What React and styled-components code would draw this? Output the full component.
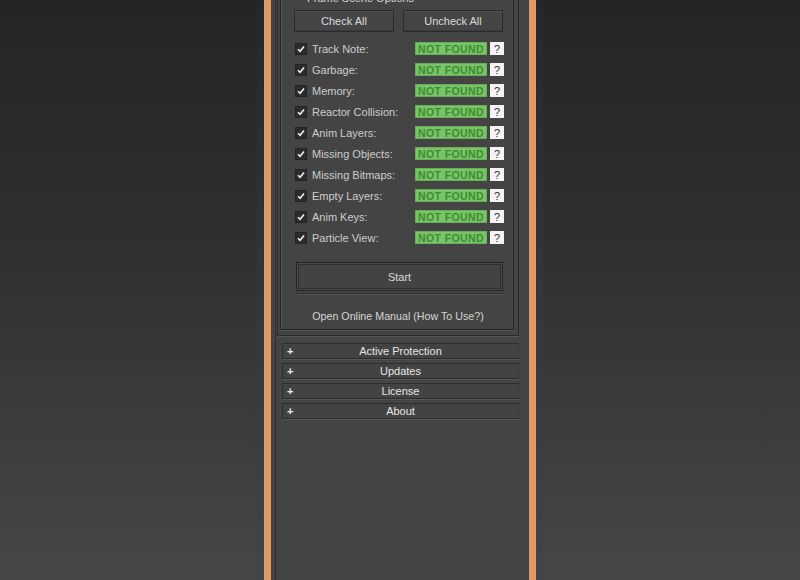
import React from "react";
import styled, { createGlobalStyle } from "styled-components";

const GlobalStyle = createGlobalStyle`
  html, body { margin: 0; padding: 0; }
  body {
    width: 800px;
    height: 580px;
    overflow: hidden;
    background: linear-gradient(180deg, #252525 0%, #2f2f2f 40%, #474747 100%);
    font-family: "Liberation Sans", Arial, sans-serif;
  }
`;

const Page = styled.div`
  height: 580px;
  display: flex;
`;

const Frame = styled.div`
  margin-left: 257px;
  width: 286px;
  height: 580px;
  box-sizing: border-box;
  padding: 0 7px;
  background: linear-gradient(180deg, #22292d 0%, #3f4649 100%);
  display: flex;
`;

const Window = styled.div`
  flex: 1;
  display: flex;
  border-left: 7px solid #e29a63;
  border-right: 7px solid #e29a63;
  background: #444444;
  overflow: hidden;
`;

const Panel = styled.div`
  flex: 1;
  margin-left: 4px;
  border-left: 1px solid #2e2e2e;
  display: flex;
  flex-direction: column;
`;

const Rollout = styled.div`
  margin: -14px 10px 0 1px;
  border: 1px solid #2a2a2a;
  box-shadow: 0 1px 0 #545454;
  padding: 4px 4px 5px 2px;
`;

const GroupBox = styled.fieldset`
  margin: 0;
  min-width: 0;
  padding: 0 9px 0 13px;
  border: 1px solid #262626;
  box-shadow: inset 1px 1px 0 #555, 0 1px 0 #555;
`;

const Legend = styled.legend`
  margin-left: 10px;
  padding: 0 3px;
  font-size: 11px;
  line-height: 14px;
  color: #d4d4d4;
`;

const ButtonRow = styled.div`
  margin-top: 5px;
  display: grid;
  grid-template-columns: 100px 100px;
  gap: 9px;
`;

const Button = styled.div`
  height: 22px;
  box-sizing: border-box;
  border: 1px solid #2b2b2b;
  background: #454545;
  box-shadow: inset 0 -1px 0 #3a3a3a, inset 0 1px 0 #4f4f4f;
  color: #dadada;
  font-size: 11px;
  display: flex;
  align-items: center;
  justify-content: center;
`;

const OptionList = styled.div`
  margin-top: 6px;
  display: flex;
  flex-direction: column;
`;

const Row = styled.div`
  height: 21px;
  display: flex;
  align-items: center;
  padding-left: 1px;
`;

const Check = styled.span`
  width: 12px;
  height: 12px;
  box-sizing: border-box;
  background: #2c2c2c;
  border: 1px solid #232323;
  display: flex;
  align-items: center;
  justify-content: center;
`;

const Label = styled.span`
  margin-left: 5px;
  flex: 1;
  color: #cdcdcd;
  font-size: 11px;
  white-space: nowrap;
`;

const Badge = styled.span`
  width: 72px;
  height: 13px;
  box-sizing: border-box;
  background: #7bc36b;
  border: 1px solid #68ae59;
  color: #3a8f2c;
  font-weight: bold;
  font-size: 10.5px;
  letter-spacing: 0.4px;
  display: flex;
  align-items: center;
  justify-content: center;
`;

const Help = styled.span`
  margin-left: 3px;
  width: 14px;
  height: 13px;
  background: #f4f4f4;
  color: #333;
  font-size: 11px;
  display: flex;
  align-items: center;
  justify-content: center;
`;

const StartButton = styled.div`
  margin: 14px 1px 0 2px;
  height: 29px;
  box-sizing: border-box;
  border: 1px solid #232323;
  box-shadow: inset 0 0 0 1px #4c4c4c, inset 0 0 0 2px #2e2e2e;
  background: #434343;
  color: #dadada;
  font-size: 11px;
  display: flex;
  align-items: center;
  justify-content: center;
`;

const Divider = styled.div`
  margin: 2px 1px 0 2px;
  height: 1px;
  background: #2c2c2c;
  box-shadow: 0 1px 0 #555;
`;

const Manual = styled.div`
  margin: 15px 0 0;
  padding-bottom: 6px;
  text-align: center;
  color: #d4d4d4;
  font-size: 10.7px;
  line-height: 14px;
  padding-right: 2px;
`;

const HeaderList = styled.div`
  margin: 7px 10px 0 6px;
  display: flex;
  flex-direction: column;
  gap: 4px;
`;

const Header = styled.div`
  height: 16px;
  box-sizing: border-box;
  border: 1px solid #2c2c2c;
  border-right-color: #3a3a3a;
  background: #434343;
  box-shadow: 0 1px 0 #575757;
  display: flex;
  align-items: center;
  padding: 0 4px;
  color: #e6e6e6;
  font-size: 11px;
`;

const Plus = styled.span`
  width: 8px;
  color: #ececec;
  font-weight: bold;
  font-size: 11px;
  line-height: 1;
`;

const HeaderTitle = styled.span`
  flex: 1;
  text-align: center;
  padding-right: 8px;
`;

const CheckMark = () => (
  <svg width="8" height="8" viewBox="0 0 8 8">
    <path d="M1 4.2 L3.1 6.3 L7 1.4" fill="none" stroke="#eeeeee" strokeWidth="1.6" />
  </svg>
);

const options = [
  "Track Note:",
  "Garbage:",
  "Memory:",
  "Reactor Collision:",
  "Anim Layers:",
  "Missing Objects:",
  "Missing Bitmaps:",
  "Empty Layers:",
  "Anim Keys:",
  "Particle View:",
];

const sections = ["Active Protection", "Updates", "License", "About"];

export default function App() {
  return (
    <>
      <GlobalStyle />
      <Page>
        <Frame>
          <Window>
            <Panel>
              <Rollout>
                <GroupBox>
                  <Legend>Frame Scene Options</Legend>
                  <ButtonRow>
                    <Button>Check All</Button>
                    <Button>Uncheck All</Button>
                  </ButtonRow>
                  <OptionList>
                    {options.map((o) => (
                      <Row key={o}>
                        <Check>
                          <CheckMark />
                        </Check>
                        <Label>{o}</Label>
                        <Badge>NOT FOUND</Badge>
                        <Help>?</Help>
                      </Row>
                    ))}
                  </OptionList>
                  <StartButton>Start</StartButton>
                  <Divider />
                  <Manual>Open Online Manual (How To Use?)</Manual>
                </GroupBox>
              </Rollout>
              <HeaderList>
                {sections.map((s) => (
                  <Header key={s}>
                    <Plus>+</Plus>
                    <HeaderTitle>{s}</HeaderTitle>
                  </Header>
                ))}
              </HeaderList>
            </Panel>
          </Window>
        </Frame>
      </Page>
    </>
  );
}
